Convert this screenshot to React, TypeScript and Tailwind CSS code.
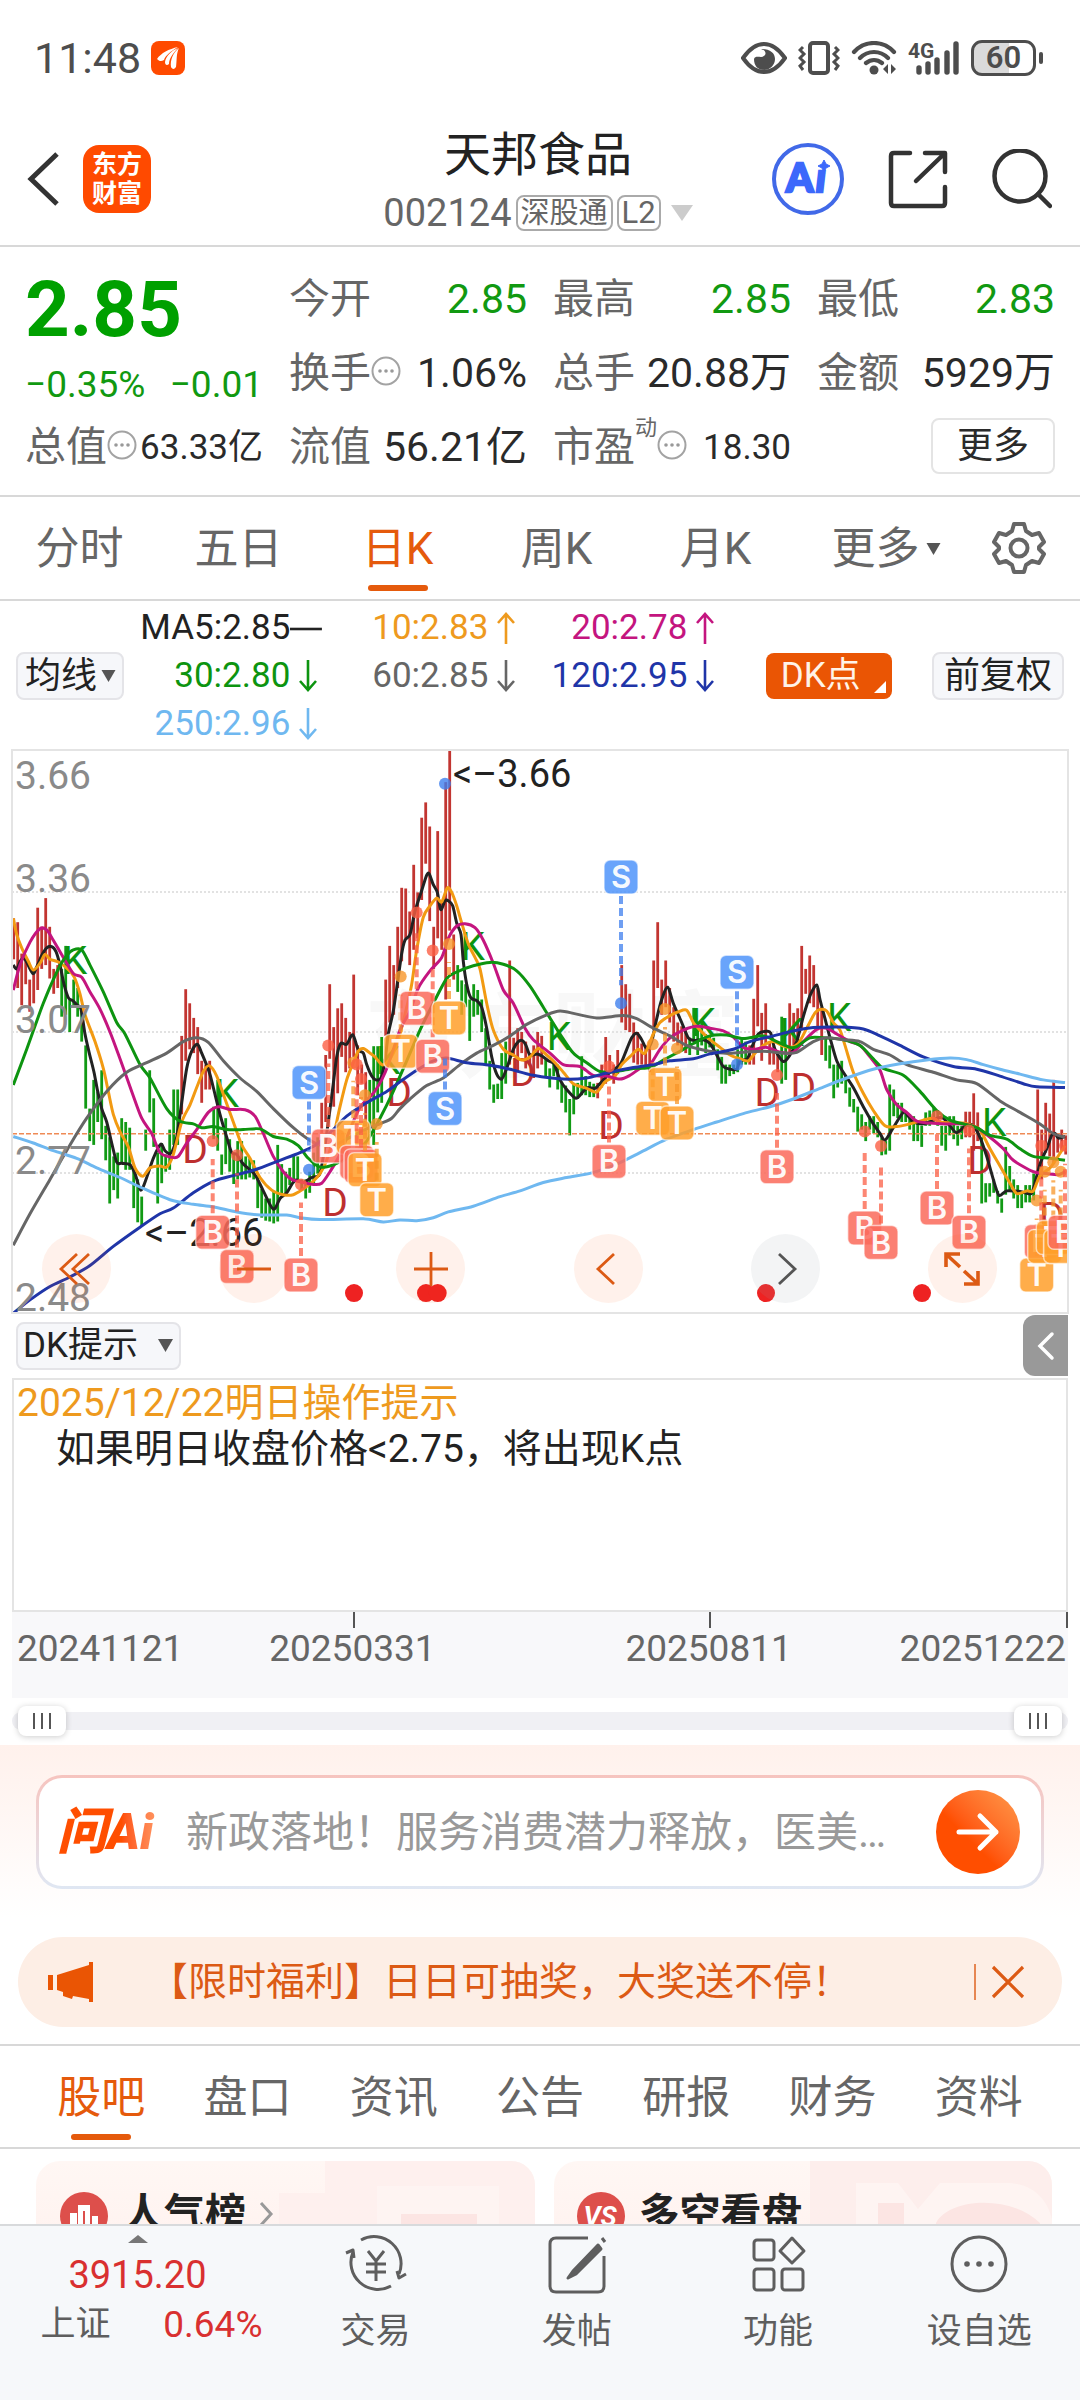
import React from "react";

type Pt = [number, number];

/* Plot space: x runs 36..3204 and y runs 28..1500 over the drawn 1056 x 563 area. */
const X = (x: number) => Math.round((x / 3 - 12) * 10) / 10;
const Y = (y: number) => Math.round((y - 28) * 0.3827 * 10) / 10;

function parse(s: string): Pt[] {
  return s
    .trim()
    .split(/\s+/)
    .map((p) => p.split(",").map(Number) as Pt);
}

function smooth(s: string): string {
  const p = parse(s).map(([x, y]) => [X(x), Y(y)] as Pt);
  let d = `M${p[0][0]} ${p[0][1]}`;
  for (let i = 0; i < p.length - 1; i++) {
    const a = p[Math.max(0, i - 1)];
    const b = p[i];
    const c = p[i + 1];
    const e = p[Math.min(p.length - 1, i + 2)];
    d += `C${b[0] + (c[0] - a[0]) / 7} ${b[1] + (c[1] - a[1]) / 7} ${c[0] - (e[0] - b[0]) / 7} ${c[1] - (e[1] - b[1]) / 7} ${c[0]} ${c[1]}`;
  }
  return d;
}

const MA5 =
  "40,590 50,600 62,578 75,575 98,612 110,595 125,565 140,545 155,542 168,555 180,590 192,640 205,675 218,683 232,695 243,705 255,770 268,820 282,870 292,915 305,965 320,1000 335,1055 350,1105 365,1108 390,1112 405,1135 422,1178 440,1145 460,1095 482,1058 495,1075 510,1083 520,1070 530,1040 545,950 560,860 575,815 592,797 605,820 628,870 640,910 660,980 680,1040 695,1080 710,1085 730,1110 765,1138 790,1180 820,1228 840,1200 860,1185 885,1152 910,1158 935,1145 958,1138 970,1090 985,1000 1000,900 1010,830 1022,795 1040,797 1058,772 1075,812 1090,820 1100,850 1115,880 1127,890 1143,885 1155,840 1165,770 1180,710 1192,640 1205,560 1215,525 1230,510 1245,450 1265,395 1280,355 1288,352 1300,380 1312,400 1322,445 1335,422 1345,422 1358,435 1370,480 1383,510 1390,580 1400,640 1412,675 1430,683 1445,700 1460,755 1475,830 1490,875 1505,888 1520,860 1540,810 1555,790 1567,787 1578,800 1590,825 1612,822 1630,830 1645,840 1662,848 1680,890 1700,915 1728,938 1750,920 1765,910 1785,912 1805,895 1830,870 1860,850 1880,810 1895,780 1910,768 1925,785 1940,808 1955,790 1970,730 1985,680 2003,648 2020,690 2045,740 2065,780 2085,787 2110,785 2130,795 2150,825 2170,855 2190,862 2210,862 2220,840 2242,835 2255,805 2275,770 2300,763 2312,768 2325,810 2350,842 2370,825 2390,790 2410,725 2430,670 2450,642 2460,680 2475,730 2490,780 2510,840 2530,870 2560,910 2590,960 2620,1005 2640,1030 2655,1047 2680,1015 2710,975 2725,985 2740,1000 2765,1005 2790,1000 2810,990 2830,990 2850,1010 2870,1028 2900,1008 2920,1010 2940,1040 2960,1090 2985,1165 2998,1192 3020,1180 3060,1182 3090,1188 3100,1175 3120,1110 3140,1070 3155,1035 3165,1030 3175,1042 3195,1038";
const MA10 =
  "40,468 50,510 65,545 85,580 100,603 120,585 135,562 150,575 175,582 200,598 222,620 240,665 255,720 285,790 310,860 325,920 340,980 360,1025 385,1065 405,1120 428,1142 450,1120 480,1115 500,1118 520,1085 545,1000 570,955 590,910 610,868 628,853 650,880 675,940 700,1000 725,1060 750,1095 780,1145 815,1178 850,1190 880,1190 910,1175 935,1158 960,1135 980,1100 1000,1040 1020,960 1040,890 1060,845 1075,815 1090,808 1110,820 1125,830 1145,850 1160,845 1180,820 1200,770 1220,700 1235,640 1250,550 1270,465 1290,435 1310,415 1325,425 1342,388 1355,400 1370,435 1385,480 1405,535 1425,570 1440,600 1460,690 1480,760 1510,810 1540,825 1565,838 1590,830 1615,808 1640,825 1665,845 1690,870 1720,900 1760,912 1790,922 1815,895 1845,880 1865,850 1895,825 1915,810 1935,820 1960,770 1980,740 2010,722 2035,712 2060,708 2080,740 2100,760 2130,785 2160,805 2190,825 2220,835 2245,840 2265,820 2290,800 2320,790 2345,800 2370,805 2395,795 2420,755 2445,715 2460,706 2480,710 2500,740 2520,760 2535,800 2560,870 2590,925 2620,970 2655,1010 2690,1012 2730,1005 2770,995 2800,990 2820,1000 2860,1003 2890,1003 2920,1010 2940,1020 2970,1070 3000,1115 3030,1160 3050,1187 3080,1180 3100,1180 3120,1140 3150,1120 3170,1095 3195,1062";
const MA20 =
  "40,655 60,590 90,530 120,495 140,498 160,525 190,570 220,612 245,622 270,660 300,705 330,765 360,835 395,920 425,990 455,1030 480,1080 515,1092 535,1090 560,1055 590,1020 625,975 655,960 690,967 735,968 765,985 790,1030 820,1090 850,1130 875,1150 910,1158 940,1163 965,1160 990,1130 1020,1085 1050,1020 1080,962 1120,925 1145,890 1165,850 1200,760 1230,710 1255,650 1290,605 1325,570 1345,520 1370,488 1395,482 1425,492 1450,525 1480,585 1510,655 1540,690 1575,755 1600,785 1650,820 1690,850 1740,855 1780,878 1820,880 1860,888 1890,878 1920,860 1950,850 1980,810 2010,780 2050,760 2090,750 2130,755 2170,762 2200,778 2230,805 2260,810 2300,805 2340,818 2380,818 2410,790 2450,758 2480,755 2510,770 2550,790 2580,800 2610,830 2640,865 2660,915 2690,955 2720,975 2750,998 2790,1003 2840,1005 2890,1005 2930,1015 2970,1040 3010,1070 3040,1100 3100,1130 3140,1135 3175,1138 3195,1130";
const MA30 =
  "40,903 80,810 130,690 175,600 200,565 220,550 245,550 270,590 310,660 350,740 375,770 420,850 450,885 500,965 540,998 580,1005 605,1015 640,1012 680,1020 730,1020 780,1018 820,1038 860,1045 895,1062 925,1095 960,1118 1000,1112 1050,1090 1100,1050 1140,990 1180,920 1220,840 1260,760 1300,690 1340,625 1370,608 1420,592 1470,583 1510,588 1550,605 1590,645 1630,700 1680,770 1720,820 1760,845 1800,868 1850,868 1900,860 1950,858 1990,838 2040,815 2080,795 2130,775 2180,773 2230,782 2290,775 2330,790 2370,805 2390,803 2430,780 2470,780 2530,785 2580,800 2620,835 2650,860 2710,878 2760,920 2810,970 2850,995 2890,1005 2930,1015 2970,1035 3020,1045 3060,1070 3100,1090 3150,1095 3195,1100";
const MA60 =
  "40,1322 90,1240 150,1150 210,1060 260,990 320,920 380,870 440,845 500,820 550,790 590,780 625,792 670,840 720,885 770,920 820,965 880,1015 930,1048 970,1062 1010,1058 1050,1040 1100,1018 1145,1003 1175,990 1200,965 1230,940 1280,905 1330,885 1380,850 1430,820 1480,800 1530,775 1580,745 1640,720 1680,710 1730,718 1790,728 1870,722 1910,730 1960,755 2010,775 2060,800 2110,812 2170,820 2230,818 2290,815 2350,820 2390,818 2440,790 2480,780 2530,785 2580,790 2620,810 2670,825 2720,850 2800,870 2870,890 2930,900 3000,945 3060,975 3120,1005 3160,1030 3195,1040";
const MA120 =
  "40,1500 90,1465 150,1430 210,1405 270,1375 340,1325 420,1275 480,1240 520,1225 580,1185 640,1155 700,1140 765,1125 840,1100 900,1080 950,1058 1000,1020 1040,985 1100,950 1160,920 1200,895 1250,865 1300,840 1340,833 1400,845 1470,852 1530,862 1600,878 1690,888 1760,885 1820,872 1900,858 1960,850 2010,840 2080,835 2130,822 2200,810 2250,790 2320,775 2380,762 2440,753 2520,752 2590,757 2640,775 2700,800 2770,830 2860,855 2930,862 3000,880 3070,900 3110,908 3195,910";
const MA250 =
  "40,1038 100,1055 160,1075 230,1095 290,1120 360,1145 420,1170 510,1203 580,1215 640,1222 710,1235 780,1243 860,1243 900,1250 960,1255 1090,1253 1150,1261 1200,1256 1250,1258 1300,1250 1345,1235 1420,1220 1500,1195 1560,1180 1630,1158 1700,1145 1775,1133 1850,1110 1920,1080 2000,1045 2080,1020 2150,1000 2230,978 2310,960 2380,940 2460,912 2540,885 2620,862 2700,848 2780,838 2850,833 2900,837 2950,850 3000,862 3060,875 3130,890 3195,897";

/* Daily bars: runs of rising (u) and falling (d) days, each bar "high,low". */
const RUNS: ["u" | "d", string][] = [
  ["u", "468,575 478,650 560,695 570,640 628,712 600,690 440,655 490,600 415,590 490,625 600,665 590,650"],
  ["d", "600,725 540,720 680,765 628,700 650,725 700,790 800,965 965,1050 890,1060 920,1000 865,1045 1010,1100 1040,1213 1090,1178 1080,1200 990,1105 1000,1125 1015,1125 1115,1225 1150,1262 1195,1272 1020,1075 865,975 938,1065 1080,1213 1055,1160 1085,1130 1020,1125 915,1060 915,1060"],
  ["u", "775,980 653,840 690,810 728,820 752,875 840,950 850,915 840,915"],
  ["d", "960,1045 890,1075 1085,1138 990,1110 1045,1130 1085,1162 1050,1150 1050,1150 1090,1150 1095,1145 1100,1150 1140,1225 1175,1250 1200,1258 1200,1260 1180,1265 1060,1260 1110,1190 1130,1190 1120,1165 1088,1160 1090,1150 1150,1180 1150,1200 1130,1185 1080,1160 1040,1135"],
  ["u", "950,1060 825,1000 640,835 752,960 703,925 690,830 728,870 765,860 615,830 800,930 850,900 870,1000"],
  ["d", "890,1040 802,1060 802,975 778,950"],
  ["u", "628,775 540,740 590,720 490,650 388,580 390,520 450,590 328,550 400,520 205,420 165,325 228,475 490,600 240,520 420,550 112,680 28,500 510,628"],
  ["d", "590,660 630,720 640,700 680,788 640,725 655,720 680,765 755,850 840,915 902,950 900,940 820,940 790,900"],
  ["u", "578,850 780,830 755,870 765,820 790,860 820,850 800,885 765,860 775,850"],
  ["d", "835,882 860,910 845,880 850,915 895,950 905,975 940,1035 898,980 898,940 828,930 880,930 895,935 900,935"],
  ["u", "898,938 850,910 778,900 825,870 850,900 812,875 590,740 640,760 665,765 740,845 765,850 795,850 800,855 790,870 578,760 478,650 628,720 578,700 650,740 700,790 740,800 750,815 760,820"],
  ["d", "780,825 702,790 750,825 740,800 770,820 775,805 780,815 810,865 830,900 850,900 850,880 850,875 810,870 785,850 790,850"],
  ["u", "800,850 678,850 590,750 715,840 690,800 790,850 800,850 820,870"],
  ["d", "725,900 800,890"],
  ["u", "690,820 715,800 703,790 540,760 600,665 565,690 590,700 650,760 700,825"],
  ["d", "780,840 800,860 850,938 850,910 840,900 880,925 910,960 940,975 960,1025 980,1020 1000,1050 985,1020 985,1030 1000,1040 1040,1087 1050,1085 902,1075 915,985 950,990 950,1000 975,1000 980,1020 985,1050 1000,1050 1010,1065 975,1010 970,1010 960,1000 970,1010 1010,1062 1010,1075 985,1035 985,1045 1010,1062 1010,1045"],
  ["u", "973,1040 973,1040 925,1075 975,1050"],
  ["d", "1040,1213 1160,1210 1160,1195 1150,1185 1180,1213 1200,1237 1065,1190 1115,1180 1150,1200 1165,1225 1180,1225 1165,1210 1165,1210 1135,1205"],
  ["u", "915,1130 1020,1150 950,1080 978,1090 890,1110 1035,1080 1020,1075 1035,1085"],
];

const BARS = RUNS.flatMap(([dir, s]) => parse(s).map(([h, l]) => ({ dir, h, l })));

const TONE = {
  B: { box: "#fa6a5a", dot: "#fb5f45" },
  S: { box: "#4f94fa", dot: "#3f7fee" },
  T: { box: "#ff9f2a", dot: "#f7962a" },
};

/* kind, x, box centre, dot centre */
const MARKS: ["B" | "S" | "T", number, number, number][] = [
  ["S", 927, 897, 1125],
  ["B", 638, 1288, 1050],
  ["B", 711, 1378, 1087],
  ["B", 903, 1400, 1163],
  ["B", 985, 1063, 800],
  ["T", 1060, 1040, 845],
  ["B", 1070, 1105, 850],
  ["B", 1083, 1115, 888],
  ["T", 1095, 1125, 930],
  ["T", 1130, 1203, 1005],
  ["T", 1202, 815, 620],
  ["B", 1250, 703, 453],
  ["B", 1298, 828, 552],
  ["S", 1335, 965, 116],
  ["T", 1347, 728, 535],
  ["B", 1827, 1103, 855],
  ["S", 1863, 360, 690],
  ["T", 1958, 990, 797],
  ["T", 1995, 902, 705],
  ["T", 2031, 1003, 808],
  ["S", 2211, 609, 850],
  ["B", 2331, 1117, 877],
  ["B", 2594, 1277, 1025],
  ["B", 2643, 1315, 1063],
  ["B", 2811, 1225, 985],
  ["B", 2907, 1288, 1022],
  ["T", 3110, 1400, 1205],
  ["B", 3124, 1312, 1062],
  ["T", 3134, 1325, 1130],
  ["T", 3160, 1302, 1105],
  ["T", 3182, 1325, 1130],
  ["B", 3195, 1288, 1062],
];

const LETTERS: ["K" | "D", number, number][] = [
  ["K", 225, 577],
  ["D", 585, 1070],
  ["K", 680, 925],
  ["D", 1005, 1210],
  ["K", 1165, 838],
  ["D", 1197, 922],
  ["K", 1418, 540],
  ["D", 1568, 870],
  ["K", 1677, 775],
  ["D", 1833, 1008],
  ["K", 2110, 738],
  ["D", 2302, 922],
  ["K", 2375, 765],
  ["D", 2410, 908],
  ["K", 2518, 725],
  ["D", 2940, 1098],
  ["K", 2983, 1000],
  ["D", 3155, 1245],
];

const LINES: [string, string][] = [
  [MA5, "#222222"],
  [MA10, "#f29a12"],
  [MA20, "#c4157f"],
  [MA30, "#0d9410"],
  [MA60, "#666666"],
  [MA120, "#1f35a8"],
  [MA250, "#6fb8f0"],
];

function Mark({ m }: { m: ["B" | "S" | "T", number, number, number] }) {
  const [k, x, box, dot] = m;
  const cx = X(x);
  const by = Y(box);
  const dy = Y(dot);
  const dir = dy > by ? 1 : -1;
  return (
    <g>
      <line x1={cx} x2={cx} y1={by + dir * 19} y2={k === "S" && dir < 0 ? by - 50 : dy - dir * 18} stroke={TONE[k].dot} strokeOpacity="0.75" strokeWidth="4" strokeDasharray="8 4" />
      <circle cx={cx} cy={dy} r="6" fill={TONE[k].dot} fillOpacity="0.8" />
      <rect x={cx - 17} y={by - 17} width="34" height="34" rx="6" fill={TONE[k].box} fillOpacity="0.85" stroke="#fff" strokeOpacity="0.6" strokeWidth="1.5" />
      <text x={cx} y={by + 11} textAnchor="middle" fontFamily="Inter" fontSize="31" fontWeight="600" fill="#fff" fillOpacity="0.95">
        {k}
      </text>
    </g>
  );
}

function KChart() {
  const axis: [string, number][] = [
    ["3.66", 39],
    ["3.36", 142],
    ["3.07", 283],
    ["2.77", 424],
    ["2.48", 561],
  ];
  return (
    <svg viewBox="0 0 1056 563" className="block h-auto w-full" role="img" aria-label="日K线图">
      <text x="352" y="320" fontSize="94" fontWeight="700" fill="#f8f8f8">
        东方财富
      </text>
      {[142, 282, 423].map((y) => (
        <line key={y} x1="0" x2="1056" y1={y} y2={y} stroke="#e2e2e2" strokeWidth="2" strokeDasharray="2 2" />
      ))}
      {BARS.map((b, i) => (
        <rect key={i} x={X(40 + 12 * i) - 1} y={Y(b.h)} width="2.8" height={Y(b.l) - Y(b.h)} fill={b.dir === "u" ? "#c23531" : "#119a14"} />
      ))}
      <line x1="0" x2="1056" y1={Y(1031)} y2={Y(1031)} stroke="#ef8a55" strokeWidth="1.5" strokeDasharray="5 2" />
      {LETTERS.map(([k, x, y]) => (
        <text key={`${k}${x}`} x={X(x)} y={Y(y) + 14} textAnchor="middle" fontSize="39" fill={k === "K" ? "#0d9410" : "#bd2f2f"}>
          {k}
        </text>
      ))}
      {LINES.map(([s, c]) => (
        <path key={c} d={smooth(s)} fill="none" stroke={c} strokeWidth="3" strokeLinejoin="round" />
      ))}
      {axis.map(([t, y]) => (
        <text key={t} x="3" y={y} fontSize="39" fill="#8a8a8a">
          {t}
        </text>
      ))}
      <text x="441" y="37" fontSize="38" fill="#222">
        {"<–3.66"}
      </text>
      <text x="133" y="496" fontSize="38" fill="#222">
        {"<–2.66"}
      </text>
      {MARKS.map((m) => (
        <Mark key={`${m[0]}${m[1]}`} m={m} />
      ))}
      {[1062, 1278, 1313, 2298, 2766].map((x) => (
        <circle key={x} cx={X(x)} cy={Y(1447)} r="9" fill="#ee2222" />
      ))}
    </svg>
  );
}

function ChartButton({ label, muted, children }: { label: string; muted?: boolean; children: React.ReactNode }) {
  return (
    <button type="button" aria-label={label} className={muted ? "grid size-[69px] place-items-center rounded-full bg-gray-400/12 text-[#555]" : "grid size-[69px] place-items-center rounded-full bg-orange-600/8 text-[#dc5a14]"}>
      <svg viewBox="0 0 40 40" className="size-[40px]" fill="none" stroke="currentColor" strokeWidth="2.8">
        {children}
      </svg>
    </button>
  );
}

function Hint() {
  return (
    <svg viewBox="0 0 30 30" className="mt-[-6px] size-[30px] shrink-0" fill="none" stroke="#a3a3a3" strokeWidth="2">
      <circle cx="15" cy="15" r="13.5" />
      <g fill="#999" stroke="none">
        <circle cx="9" cy="15" r="1.8" />
        <circle cx="15" cy="15" r="1.8" />
        <circle cx="21" cy="15" r="1.8" />
      </g>
    </svg>
  );
}

function Stat({ label, value, green, small, children }: { label: string; value: string; green?: boolean; small?: boolean; children?: React.ReactNode }) {
  return (
    <div className="flex h-[74px] items-center justify-between whitespace-nowrap">
      <dt className="flex items-center text-[41px] text-[#666]">
        {label}
        {children}
      </dt>
      <dd className={green ? "text-[41px] text-[#119911]" : small ? "text-[35px] text-[#2a2a2a]" : "text-[41px] text-[#2a2a2a]"}>{value}</dd>
    </div>
  );
}

function StatusBar() {
  return (
    <div className="flex h-[116px] items-center justify-between pr-[37px] pl-[34px] text-[#4d4d4d]">
      <div className="flex items-center gap-[10px]">
        <time className="text-[43px]">11:48</time>
        <svg viewBox="0 0 34 34" className="size-[34px]">
          <rect width="34" height="34" rx="8" fill="#ff4a00" />
          <path d="M6 18C10 12 18 8 27 6 20 10 14 15 13 19 10 21 8 20 6 18ZM14 21C15 15 20 10 27 7 22 12 18 18 18 23 16 25 14 24 14 21ZM20 26C19 19 22 12 28 7 25 13 26 20 25 26 23 29 21 28 20 26Z" fill="#fff" />
        </svg>
      </div>
      <div className="flex items-center gap-[11px]">
        <svg viewBox="0 0 46 32" className="h-[32px] w-[46px]" fill="none" stroke="currentColor" strokeWidth="4">
          <path d="M2 16C9 6 16 2 23 2s14 4 21 14C37 26 30 30 23 30S9 26 2 16Z" />
          <path d="M20 7c7 2 5 8 0 8-3 0-6-1-7 2 0 7 4 11 10 11s11-5 11-11S29 7 20 7Z" fill="currentColor" stroke="none" />
        </svg>
        <svg viewBox="0 0 42 34" className="h-[34px] w-[42px]" fill="none" stroke="currentColor" strokeWidth="4">
          <rect x="12" y="2" width="18" height="30" rx="3" />
          <path d="M5 6 2 9l4 4-4 4 4 4-4 4 3 4M37 6l3 3-4 4 4 4-4 4 4 4-3 4" strokeWidth="3" />
        </svg>
        <svg viewBox="0 0 46 34" className="h-[34px] w-[46px]" fill="none" stroke="currentColor" strokeWidth="4.2" strokeLinecap="round">
          <path d="M3 11C14-1 32-1 43 11M9 17c8-8 20-8 28 0M15 22c5-4 11-4 16 0" />
          <circle cx="23" cy="29" r="4.5" fill="currentColor" stroke="none" />
          <path d="M37 23v10l-5-5zM40 23v10l5-5z" fill="currentColor" stroke="none" />
        </svg>
        <svg viewBox="0 0 52 36" className="h-[36px] w-[52px] overflow-visible" stroke="currentColor" strokeWidth="5.4" strokeLinecap="round">
          <text x="0" y="18" fontSize="21" fontWeight="700" fill="currentColor" stroke="none">
            4G
          </text>
          <path d="M11 28v4M20 24v8M29 20v12M39 13v19M48 4v28" />
        </svg>
        <div className="flex items-center gap-[3px]">
          <span className="grid h-[36px] w-[65px] place-items-center rounded-[11px] border-3 border-[#4d4d4d] bg-linear-to-r from-[#dadada] from-60% to-white to-60% text-[31px] leading-[30px] font-semibold">60</span>
          <span className="h-3 w-1 rounded bg-[#4d4d4d]" />
        </div>
      </div>
    </div>
  );
}

function Header() {
  return (
    <header className="flex h-[131px] items-center justify-between border-b-2 border-[#d8d8d8] pr-[28px] pb-[4px] pl-[24px]">
      <div className="flex w-[280px] items-center gap-[21px]">
        <button type="button" aria-label="返回">
          <svg viewBox="0 0 38 56" className="h-[56px] w-[38px]" fill="none" stroke="#333" strokeWidth="5">
            <path d="M33 3 7 28 33 53" />
          </svg>
        </button>
        <a href="#home" className="grid size-[68px] place-items-center rounded-2xl bg-[#ff4a00] text-center text-[25px] leading-[29px] font-bold text-white">
          <span>
            东方
            <br />
            财富
          </span>
        </a>
      </div>
      <div className="flex flex-col items-center pt-[8px]">
        <h1 className="text-[47px] leading-[60px] text-[#222]">天邦食品</h1>
        <button type="button" className="flex items-center gap-1 text-[38px] leading-[56px] text-[#666]">
          002124
          <span className="rounded-lg border-2 border-[#aaa] px-[3px] text-[29px] leading-[32px]">深股通</span>
          <span className="rounded-lg border-2 border-[#aaa] px-[3px] text-[31px] leading-[32px]">L2</span>
          <svg viewBox="0 0 22 16" className="ml-[6px] h-[16px] w-[22px]" fill="#ccc">
            <path d="M0 0h22L11 16z" />
          </svg>
        </button>
      </div>
      <div className="flex w-[280px] items-center justify-between">
        <button type="button" aria-label="AI助手">
          <svg viewBox="0 0 72 72" className="size-[72px]">
            <circle cx="36" cy="36" r="34" fill="none" stroke="#4169e8" strokeWidth="4" />
            <g fontFamily="Lato" fontWeight="900" fontSize="39" fill="#3c68fb" stroke="#3c68fb" strokeWidth="2.4">
              <text x="14" y="49">
                A
              </text>
              <text x="44" y="49" fontStyle="italic">
                ı
              </text>
            </g>
            <path d="m52 17 2 4 4 2-4 2-2 4-2-4-4-2 4-2z" fill="#3c68fb" stroke="#3c68fb" />
          </svg>
        </button>
        <button type="button" aria-label="分享">
          <svg viewBox="0 0 60 60" className="size-[60px]" fill="none" stroke="#333" strokeWidth="4.5" strokeLinecap="round" strokeLinejoin="round">
            <path d="M22 4H6Q3 4 3 7v47q0 3 3 3h48q3 0 3-3V38M37 4h20v19M56 5 28 32" />
          </svg>
        </button>
        <button type="button" aria-label="搜索">
          <svg viewBox="0 0 60 60" className="size-[60px]" fill="none" stroke="#333" strokeWidth="4.5" strokeLinecap="round">
            <circle cx="28" cy="27" r="25.5" />
            <path d="m46 45 12 12" />
          </svg>
        </button>
      </div>
    </header>
  );
}

function Caret({ className }: { className: string }) {
  return (
    <svg viewBox="0 0 14 12" className={className} fill="#555">
      <path d="M0 0h14L7 12z" />
    </svg>
  );
}

function Quote() {
  return (
    <dl className="grid h-[250px] grid-cols-4 gap-x-[26px] border-b-2 border-[#d8d8d8] px-[25px] pt-[16px] whitespace-nowrap">
      <div>
        <div className="h-[148px] text-[#00a000]">
          <dt aria-label="最新价" />
          <dd className="h-[94px] text-[78px] leading-[94px] font-bold">2.85</dd>
          <dd className="flex justify-between text-[37px] leading-[56px] text-[#119911]">
            <span>−0.35%</span>
            <span>−0.01</span>
          </dd>
        </div>
        <Stat label="总值" value="63.33亿" small>
          <Hint />
        </Stat>
      </div>
      <div>
        <Stat label="今开" value="2.85" green />
        <Stat label="换手" value="1.06%">
          <Hint />
        </Stat>
        <Stat label="流值" value="56.21亿" />
      </div>
      <div>
        <Stat label="最高" value="2.85" green />
        <Stat label="总手" value="20.88万" />
        <Stat label="市盈" value="18.30" small>
          <span className="self-start text-[22px] leading-[22px]">动</span>
          <Hint />
        </Stat>
      </div>
      <div>
        <Stat label="最低" value="2.83" green />
        <Stat label="金额" value="5929万" />
        <div className="flex h-[74px] items-center justify-end">
          <button type="button" className="mb-1 h-[56px] w-[124px] rounded-lg border-2 border-[#e4e4e4] text-[36px] leading-[50px] text-[#2a2a2a]">
            更多
          </button>
        </div>
      </div>
    </dl>
  );
}

function PeriodTabs() {
  return (
    <nav className="flex h-[104px] border-b-2 border-[#d8d8d8] text-[44px] text-[#666]">
      {["分时", "五日", "日K", "周K", "月K"].map((t) => (
        <button key={t} type="button" className={t === "日K" ? "relative flex-1 pt-[2px] text-[#e55a0c]" : "relative flex-1 pt-[2px]"}>
          {t}
          {t === "日K" && <span className="absolute bottom-[8px] left-1/2 h-[6px] w-[60px] -translate-x-1/2 rounded-full bg-[#e55a0c]" />}
        </button>
      ))}
      <button type="button" className="flex w-[182px] items-center justify-center gap-[6px] pt-[2px]">
        更多
        <Caret className="h-[12px] w-[15px]" />
      </button>
      <button type="button" aria-label="设置" className="grid w-[103px] place-items-center pr-[20px]">
        <svg viewBox="0 0 56 56" className="size-[56px]" fill="none" stroke="#666" strokeWidth="4" strokeLinejoin="round">
          <path d="M23 4h10l2 7 6 4 7-2 5 9-5 5v2l5 5-5 9-7-2-6 4-2 7H23l-2-7-6-4-7 2-5-9 5-5v-2l-5-5 5-9 7 2 6-4z" />
          <circle cx="28" cy="28" r="8.5" />
        </svg>
      </button>
    </nav>
  );
}

function Arrow({ dir }: { dir: "up" | "down" | "flat" }) {
  const d = dir === "up" ? "M10 32V2M2 11 10 2l8 9" : dir === "down" ? "M10 0v30M2 21l8 9 8-9" : "M0 17h32";
  return (
    <svg viewBox={dir === "flat" ? "0 0 32 32" : "0 0 20 32"} className={dir === "flat" ? "h-[32px] w-[32px]" : "mr-[4px] ml-[8px] h-[32px] w-[20px]"} fill="none" stroke="currentColor" strokeWidth="2.6">
      <path d={d} />
    </svg>
  );
}

function Averages() {
  const items: [string, string, "up" | "down" | "flat"][] = [
    ["MA5:2.85", "text-[#222]", "flat"],
    ["10:2.83", "text-[#ee9a1e]", "up"],
    ["20:2.78", "text-[#c4157f]", "up"],
    ["30:2.80", "text-[#0d9410]", "down"],
    ["60:2.85", "text-[#666]", "down"],
    ["120:2.95", "text-[#1f35a8]", "down"],
    ["250:2.96", "text-[#6fb8f0]", "down"],
  ];
  return (
    <div className="flex h-[149px] items-center justify-between px-[16px] whitespace-nowrap">
      <div className="relative">
        <select aria-label="主图指标" defaultValue="均线" className="h-[48px] w-[108px] appearance-none rounded-lg border-2 border-[#e4e4e8] bg-[#f6f7fa] pl-[7px] text-[36px] leading-[44px] text-[#222]">
          <option>均线</option>
        </select>
        <Caret className="pointer-events-none absolute top-[18px] right-[8px] h-[12px] w-[15px]" />
      </div>
      <ul className="mr-[30px] grid grid-cols-[182px_198px_199px] text-[35px] leading-[48px]">
        {items.map(([t, c, d]) => (
          <li key={t} className={`flex items-center justify-end ${c}`}>
            {t}
            <Arrow dir={d} />
          </li>
        ))}
      </ul>
      <button type="button" className="relative mr-[24px] h-[46px] w-[126px] rounded-lg bg-[#ea5504] pr-[16px] text-[35px] leading-[46px] text-[#fff3e8]">
        DK点
        <svg viewBox="0 0 12 12" className="absolute right-[6px] bottom-[6px] size-[12px]" fill="#fff">
          <path d="M12 0v12H0z" />
        </svg>
      </button>
      <button type="button" className="h-[48px] w-[132px] rounded-lg border-2 border-[#e4e4e8] bg-[#f6f7fa] text-[36px] leading-[44px] text-[#222]">
        前复权
      </button>
    </div>
  );
}

function ChartSection() {
  const thumb =
    "pointer-events-none absolute inset-x-[6px] top-0 h-[30px] w-[calc(100%-12px)] appearance-none bg-transparent [&::-webkit-slider-thumb]:pointer-events-auto [&::-webkit-slider-thumb]:h-[30px] [&::-webkit-slider-thumb]:w-[48px] [&::-webkit-slider-thumb]:appearance-none [&::-webkit-slider-thumb]:rounded-lg [&::-webkit-slider-thumb]:bg-white [&::-webkit-slider-thumb]:bg-[linear-gradient(90deg,#555_2px,transparent_2px,transparent_8px,#555_8px,#555_10px,transparent_10px,transparent_16px,#555_16px)] [&::-webkit-slider-thumb]:bg-[length:18px_16px] [&::-webkit-slider-thumb]:bg-center [&::-webkit-slider-thumb]:bg-no-repeat [&::-webkit-slider-thumb]:shadow-[0_1px_6px_rgba(0,0,0,0.2)]";
  return (
    <section className="px-[12px]">
      <div className="relative">
        <div className="overflow-hidden outline-2 -outline-offset-1 outline-[#e4e4e4]">
          <KChart />
        </div>
        <div className="absolute inset-x-0 bottom-[10px] flex justify-between pr-[71px] pl-[30px]">
          <ChartButton label="最早">
            <path d="M20 5 4 20l16 15M32 5 16 20l16 15" />
          </ChartButton>
          <ChartButton label="缩小">
            <path d="M3 20h34" />
          </ChartButton>
          <ChartButton label="放大">
            <path d="M3 20h34M20 3v34" />
          </ChartButton>
          <ChartButton label="左移">
            <path d="M26 5 10 20l16 15" />
          </ChartButton>
          <ChartButton label="右移" muted>
            <path d="m14 5 16 15-16 15" />
          </ChartButton>
          <ChartButton label="全屏">
            <path d="M4 18V5h14M5 6l13 12M36 22v13H22M35 34 22 22" strokeWidth="3.6" />
          </ChartButton>
        </div>
      </div>
      <div className="flex h-[65px] items-center justify-between pl-[4px]">
        <div className="relative">
          <select aria-label="副图指标" defaultValue="DK提示" className="h-[48px] w-[165px] appearance-none rounded-lg border-2 border-[#e4e4e8] bg-[#f6f7fa] pl-[5px] text-[35px] leading-[44px] text-[#222]">
            <option>DK提示</option>
          </select>
          <Caret className="pointer-events-none absolute top-[17px] right-[8px] h-[13px] w-[15px]" />
        </div>
        <button type="button" aria-label="展开" className="grid h-[61px] w-[45px] place-items-center rounded-l-xl bg-[#999]">
          <svg viewBox="0 0 18 30" className="h-[30px] w-[18px]" fill="none" stroke="#fff" strokeWidth="3.5" strokeLinecap="round">
            <path d="M15 3 3 15l12 12" />
          </svg>
        </button>
      </div>
      <div className="h-[234px] border-2 border-[#e4e4e4] text-[39px] leading-[46px]">
        <p className="pl-[3px] text-[#ee9a1e]">2025/12/22明日操作提示</p>
        <p className="pl-[42px] text-[#222]">{"如果明日收盘价格<2.75，将出现K点"}</p>
      </div>
      <div className="h-[86px] bg-[#f8f8fa] text-[37px] text-[#666]">
        <div className="flex h-[16px]">
          <span className="w-[32.5%] border-r-2 border-[#555]" />
          <span className="w-[33.7%] border-r-2 border-[#555]" />
          <span className="flex-1 border-r-2 border-[#555]" />
        </div>
        <div className="flex justify-between pr-[2px] pl-[5px] leading-[42px]">
          <span>20241121</span>
          <span className="-ml-[22px]">20250331</span>
          <span className="ml-[82px]">20250811</span>
          <span>20251222</span>
        </div>
      </div>
      <div className="relative mt-[8px] mb-[9px] h-[30px]">
        <div className="absolute inset-x-0 top-[6px] h-[18px] rounded-full bg-[#f0f0f4]" />
        <input type="range" aria-label="起始日期" min="0" max="100" defaultValue="0" className={thumb} />
        <input type="range" aria-label="结束日期" min="0" max="100" defaultValue="100" className={thumb} />
      </div>
    </section>
  );
}

function AskAi() {
  return (
    <section className="bg-linear-to-b from-[#fff1ec] to-white to-90% px-[36px] pt-[30px] pb-[48px]">
      <form className="rounded-[26px] bg-linear-to-b from-[#f6c4bf] to-[#dfe7f3] p-[3px]">
        <div className="flex h-[108px] items-center rounded-[23px] bg-white pr-[21px] pl-[18px]">
          <span className="w-[129px] bg-linear-to-r from-[#ff4e00] from-50% to-[#ff9a66] to-80% bg-clip-text text-[50px] leading-[60px] font-black whitespace-nowrap text-transparent italic">问Ai</span>
          <input aria-label="问Ai" placeholder="新政落地！服务消费潜力释放，医美…" className="min-w-0 flex-1 pt-[2px] text-[42px] leading-[60px] placeholder:text-[#999]" />
          <button type="submit" aria-label="发送" className="grid size-[84px] place-items-center rounded-full bg-linear-to-tr from-[#ff4e00] from-40% to-[#ff9a4a]">
            <svg viewBox="0 0 44 40" className="h-[40px] w-[44px]" fill="none" stroke="#fff" strokeWidth="5" strokeLinecap="round" strokeLinejoin="round">
              <path d="M3 20h37M24 4l16 16-16 16" />
            </svg>
          </button>
        </div>
      </form>
    </section>
  );
}

function Promo() {
  return (
    <div className="mx-[18px] mb-[17px] flex h-[90px] items-center rounded-full bg-[#fdeee5] pr-[36px] pl-[29px] text-[#dc5a14]">
      <svg viewBox="0 0 48 40" className="h-[40px] w-[48px]" fill="#ea5504">
        <path d="M1 13h5v15H1zM10 13 42 3V0h4v40h-4v-3l-16-3-1 3-9-3v-4l-6-2z" />
      </svg>
      <a href="#promo" className="ml-[54px] flex-1 text-[39px] whitespace-nowrap">
        【限时福利】日日可抽奖，大奖送不停！
      </a>
      <span className="mr-[14px] h-[36px] w-[2px] bg-[#dc5a14]/70" />
      <button type="button" aria-label="关闭">
        <svg viewBox="0 0 36 36" className="size-[36px]" fill="none" stroke="currentColor" strokeWidth="3.2">
          <path d="m3 3 30 30M33 3 3 33" />
        </svg>
      </button>
    </div>
  );
}

function ContentTabs() {
  return (
    <nav className="flex h-[105px] border-y-2 border-[#d8d8d8] px-[28px] text-[44px] text-[#666]">
      {["股吧", "盘口", "资讯", "公告", "研报", "财务", "资料"].map((t) => (
        <button key={t} type="button" className={t === "股吧" ? "relative flex-1 pt-[2px] text-[#e55a0c]" : "relative flex-1 pt-[2px]"}>
          {t}
          {t === "股吧" && <span className="absolute bottom-[7px] left-1/2 h-[6px] w-[60px] -translate-x-1/2 rounded-full bg-[#e55a0c]" />}
        </button>
      ))}
    </nav>
  );
}

function Cards() {
  return (
    <div className="grid grid-cols-2 gap-[19px] px-[36px] pt-[12px] pr-[28px] text-[41px] font-bold text-[#222]">
      <a href="#rank" className="relative flex h-[160px] items-start gap-[15px] overflow-hidden rounded-3xl bg-linear-to-b from-[#fff7f4] to-[#ffeeeb] pt-[25px] pl-[24px]">
        <svg viewBox="0 0 256 160" className="absolute top-0 right-0 h-[160px] w-[256px]" fill="#fef0ee">
          <path d="M46 0h210v160H0V32h46z" />
          <path d="M98 25h122v135H98z" fill="#fef4f2" />
          <path d="M122 53h76v107h-76z" fill="#fce5e3" />
        </svg>
        <svg viewBox="0 0 48 48" className="relative mt-[6px] size-[48px]">
          <circle cx="24" cy="24" r="24" fill="#dd4f4b" />
          <path d="M10 21h7v18h-7zM18 13h12v26H18zM32 24h6v15h-6z" fill="#fff" />
          <path d="M23 19h2v16h-2z" fill="#dd4f4b" />
        </svg>
        <span className="relative flex items-center gap-[12px] leading-[56px]">
          人气榜
          <svg viewBox="0 0 16 26" className="h-[26px] w-[16px]" fill="none" stroke="#999" strokeWidth="3">
            <path d="m3 2 10 11L3 24" />
          </svg>
        </span>
      </a>
      <a href="#view" className="relative flex h-[160px] items-start gap-[14px] overflow-hidden rounded-3xl bg-linear-to-b from-[#fff7f4] to-[#ffeeeb] pt-[25px] pl-[23px]">
        <svg viewBox="0 0 242 160" className="absolute top-0 right-0 h-[160px] w-[242px]" fill="#fdeeec">
          <path d="M0 0h242v160H0z" />
          <path d="M46 22h42l20 26 22-26h66c30 0 42 20 46 36v102H46z" fill="#fef4f2" />
          <path d="M68 42h26v118H68zM126 62c14-26 76-28 104 0l-6 98h-92z" fill="#fce5e3" />
        </svg>
        <svg viewBox="0 0 48 48" className="relative mt-[6px] size-[48px]">
          <circle cx="24" cy="24" r="24" fill="#dd4f4b" />
          <text x="23" y="34" textAnchor="middle" fontSize="27" fontWeight="700" fontStyle="italic" fill="#fff">
            VS
          </text>
        </svg>
        <span className="relative leading-[56px]">多空看盘</span>
      </a>
    </div>
  );
}

const NAV: [string, React.ReactNode][] = [
  [
    "交易",
    <>
      <path d="M17 8A27 27 0 0 1 55 42M47 54A27 27 0 0 1 9 20" />
      <path d="M2 21l7-3 1 8M62 42l-7 4-2-7M24 19l8 10 8-10M32 29v20M22 32h20M22 40h20" />
    </>,
  ],
  [
    "发帖",
    <>
      <path d="M43 6H11q-6 0-6 6v42q0 6 6 6h42q6 0 6-6V24" />
      <path d="M53 13 28 39l-5 7 8-4 25-25zM57 6l3 4" fill="currentColor" />
    </>,
  ],
  [
    "功能",
    <>
      <rect x="8" y="8" width="20" height="20" rx="3" />
      <rect x="8" y="37" width="20" height="21" rx="3" />
      <rect x="36" y="37" width="21" height="21" rx="3" />
      <path d="m46 6 12 13-12 12-12-12z" />
    </>,
  ],
  [
    "设自选",
    <>
      <circle cx="32" cy="32" r="27" />
      <g fill="currentColor" stroke="none">
        <circle cx="20" cy="32" r="2.8" />
        <circle cx="32" cy="32" r="2.8" />
        <circle cx="44" cy="32" r="2.8" />
      </g>
    </>,
  ],
];

function BottomNav() {
  return (
    <nav className="flex h-[176px] shrink-0 border-t-2 border-[#d8dadc] bg-[#f6f8fa] text-[35px] text-[#5e5e5e]">
      <button type="button" className="flex w-[275px] flex-col items-center pt-[9px]">
        <svg viewBox="0 0 20 8" className="h-[8px] w-[20px]" fill="#777">
          <path d="M10 0 20 8H0z" />
        </svg>
        <span className="mt-[9px] text-[38px] leading-[46px] text-[#d93030]">3915.20</span>
        <span className="flex w-[250px] items-center justify-between pl-[28px] leading-[54px]">
          上证<span className="text-[37px] text-[#d93030]">0.64%</span>
        </span>
      </button>
      {NAV.map(([t, icon]) => (
        <button key={t} type="button" className="flex flex-1 flex-col items-center pt-[6px]">
          <svg viewBox="0 0 64 64" className="size-[64px]" fill="none" stroke="currentColor" strokeWidth="3" strokeLinejoin="round">
            {icon}
          </svg>
          <span className="mt-[11px] leading-[50px]">{t}</span>
        </button>
      ))}
    </nav>
  );
}

export default function App() {
  return (
    <div className="flex h-screen flex-col bg-white font-[Roboto,'Noto_Sans_CJK_SC',sans-serif]">
      <main className="min-h-0 flex-1 overflow-hidden">
        <StatusBar />
        <Header />
        <Quote />
        <PeriodTabs />
        <Averages />
        <ChartSection />
        <AskAi />
        <Promo />
        <ContentTabs />
        <Cards />
      </main>
      <BottomNav />
    </div>
  );
}
